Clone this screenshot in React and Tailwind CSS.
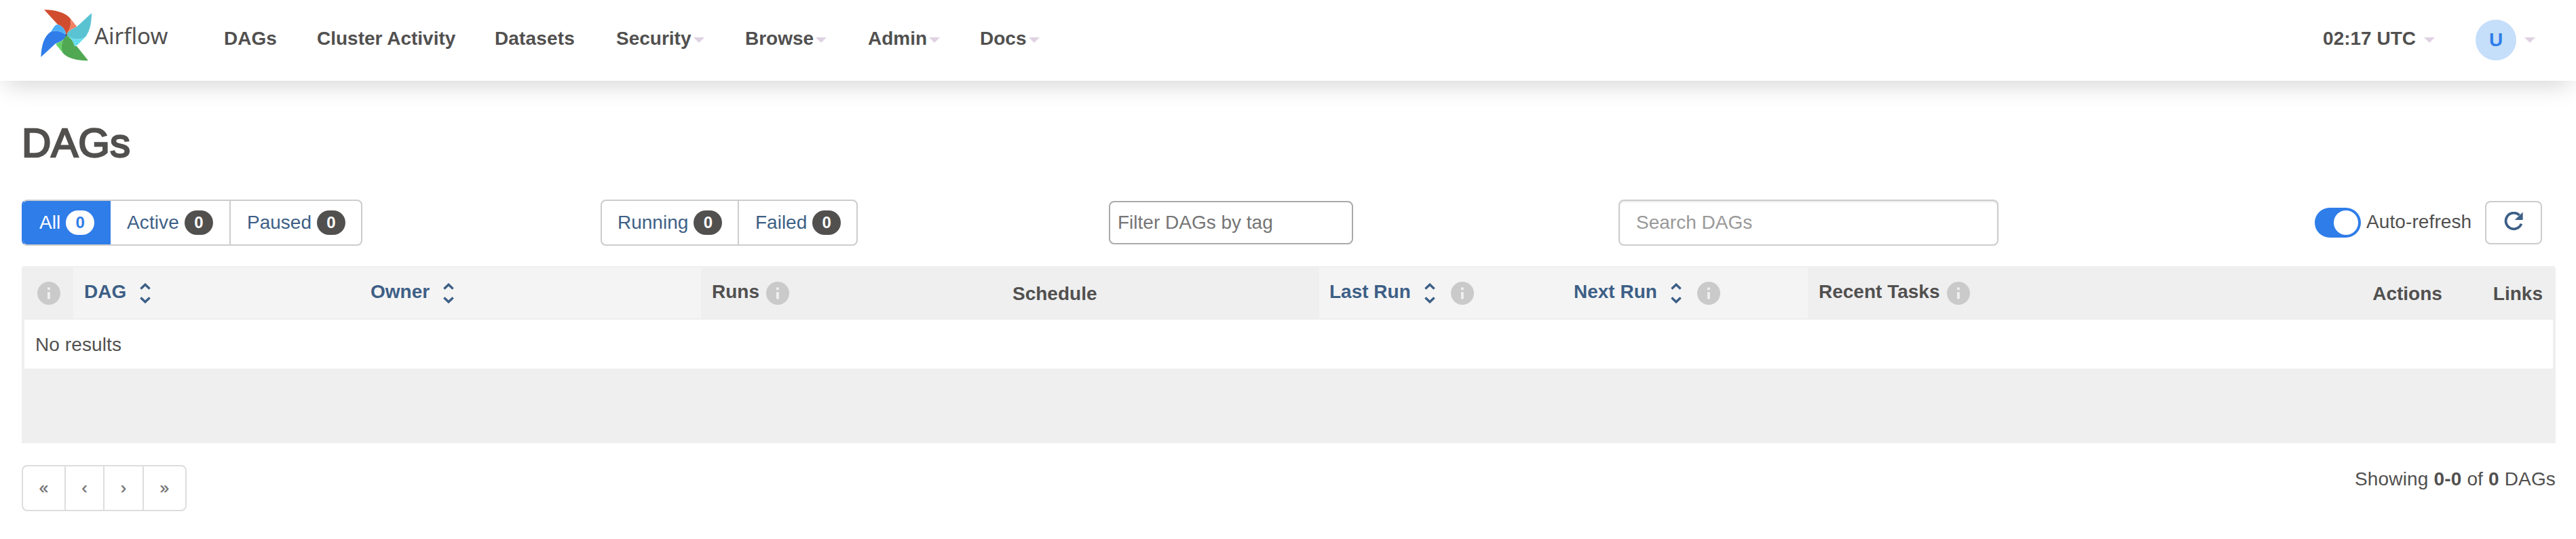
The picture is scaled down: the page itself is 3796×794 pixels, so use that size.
const Caret = ({ className = '' }) => (
  <svg width="16" height="8" viewBox="0 0 16 8" className={`shrink-0 ${className}`}>
    <path d="M0 0H16L8 8Z" fill="#dfd2e2" />
  </svg>
);

const Info = ({ className = '' }) => (
  <svg width="34" height="34" viewBox="0 0 34 34" className={`shrink-0 ${className}`}>
    <circle cx="17" cy="17" r="17" fill="#cacaca" />
    <rect x="15" y="8.4" width="3.8" height="3.6" fill="#f0f0f0" />
    <rect x="15" y="15.2" width="3.8" height="10.3" fill="#f0f0f0" />
  </svg>
);

const Sort = ({ className = '' }) => (
  <svg width="16" height="30" viewBox="0 0 16 30" className={`shrink-0 ${className}`}>
    <path d="M1.4 8.4L8 2.2L14.6 8.4M1.4 21.6L8 27.8L14.6 21.6" fill="none" stroke="#3d5f86" strokeWidth="3.4" />
  </svg>
);

const Logo = () => (
  <svg width="80" height="80" viewBox="28 36 240 240" className="shrink-0">
    <path d="M46 43C92 43 142 56 162 82C168 105 161 128 144 155C140 132 128 115 106 108Z" fill="#d14d2f" />
    <path d="M162 82L191 118C165 130 152 140 144 155C161 128 168 105 162 82Z" fill="#f08163" />
    <path d="M256 58L191 118C165 130 152 140 144 155C172 176 205 180 230 162C250 135 256 95 256 58Z" fill="#59c3d2" />
    <path d="M230 162L190 202L180 203C174 180 162 167 144 155C172 176 205 180 230 162Z" fill="#66ddee" />
    <path d="M241 268L190 204L180 203C174 180 162 167 144 155C125 175 118 205 128 233C150 260 195 267 241 268Z" fill="#50a852" />
    <path d="M128 233L97 194C115 186 137 175 144 155C125 175 118 205 128 233Z" fill="#63d265" />
    <path d="M32 252C34 200 45 160 76 140C98 132 122 137 144 155C137 175 115 186 97 192Z" fill="#307dea" />
    <path d="M76 140C84 126 92 115 98 110L106 108C128 115 140 132 144 155C122 137 98 132 76 140Z" fill="#4cb0f8" />
    <circle cx="144" cy="155" r="4" fill="#51504f" />
  </svg>
);

const Badge = ({ active, children }) => (
  <span
    className={
      active
        ? 'flex h-9 w-[42px] items-center justify-center rounded-full bg-white text-2xl font-bold text-[#2f7de9]'
        : 'flex h-9 w-[42px] items-center justify-center rounded-full bg-[#51504f] text-2xl font-bold text-white'
    }
  >
    {children}
  </span>
);

export default function App() {
  return (
    <div className="h-[794px] w-[3796px] overflow-hidden bg-white font-['Liberation_Sans',Arial,sans-serif] text-[28px] leading-8 text-[#51504f]">
      <header className="flex h-[119px] items-start bg-white shadow-[0_12px_36px_-8px_rgba(0,0,0,0.19)]">
        <a className="ml-[59px] flex h-[90px] w-[271px] items-start pt-3">
          <Logo />
          <span className="mt-[18px] font-['Noto_Sans',sans-serif] text-[33px] leading-[45px]">Airflow</span>
        </a>
        <nav className="flex h-[114px] items-center font-bold">
          <a className="w-[137px]">DAGs</a>
          <a className="w-[262px]">Cluster Activity</a>
          <a className="w-[179px] tracking-[0.15px]">Datasets</a>
          <a className="flex w-[190px] items-center">Security<Caret className="ml-[3px] mt-1" /></a>
          <a className="flex w-[181px] items-center">Browse<Caret className="ml-[3px] mt-1" /></a>
          <a className="flex w-[165px] items-center">Admin<Caret className="ml-[3px] mt-1" /></a>
          <a className="flex items-center">Docs<Caret className="ml-[4px] mt-1" /></a>
        </nav>
        <div className="ml-auto mr-[60px] flex h-[114px] items-center font-bold">
          <span>02:17 UTC</span>
          <Caret className="ml-3 mt-1" />
          <span className="ml-[60px] mt-1 flex size-[60px] items-center justify-center rounded-full bg-[#c5defa] text-[#2f7de9]">U</span>
          <Caret className="ml-3 mt-1" />
        </div>
      </header>

      <main className="pl-8 pr-[30px]">
        <h1 className="mt-[57px] h-[70px] text-[60px] leading-[70px] [-webkit-text-stroke:2.4px_#51504f]">DAGs</h1>

        <div className="mt-12 flex h-[68px] items-center">
          <div className="flex h-[68px] w-[502px] overflow-hidden rounded-lg border-2 border-[#ccc] text-[#3d5f86] [border-left-color:#2f7de9]">
            <a className="-my-0.5 -ml-0.5 flex w-[131px] items-center gap-2 bg-[#2f7de9] pl-[26px] text-white">All<Badge active>0</Badge></a>
            <a className="flex w-[177px] items-center gap-2 border-r-2 border-[#ccc] pl-[24px] tracking-[0.1px]">Active<Badge>0</Badge></a>
            <a className="flex items-center gap-2 pl-[24px]">Paused<Badge>0</Badge></a>
          </div>
          <div className="ml-[351px] flex h-[68px] w-[379px] rounded-lg border-2 border-[#ccc] text-[#3d5f86]">
            <a className="flex w-[202px] items-center gap-2 border-r-2 border-[#ccc] pl-[23px]">Running<Badge>0</Badge></a>
            <a className="flex items-center gap-2 pl-[24px]">Failed<Badge>0</Badge></a>
          </div>
          <div className="ml-[370px] flex h-16 w-[360px] items-center rounded-lg border-2 border-[#aaa] pl-[11px] text-[#757575]">Filter DAGs by tag</div>
          <div className="ml-[391px] flex h-[68px] w-[560px] items-center rounded-lg border-2 border-[#ccc] pl-6 text-[#999] shadow-[inset_0_2px_2px_rgba(0,0,0,0.075)]">Search DAGs</div>
          <div className="ml-auto mr-5 flex items-center">
            <span className="flex h-11 w-[68px] items-center justify-end rounded-full bg-[#2f7de9] pr-1">
              <span className="size-9 rounded-full bg-white" />
            </span>
            <span className="ml-2 w-[175px] pb-0.5 tracking-[0.1px]">Auto-refresh</span>
            <button className="flex h-16 w-[84px] items-center justify-center rounded-lg border-2 border-[#ccc]">
              <svg width="28" height="28" viewBox="0 0 28 28" className="-mt-1">
                <path d="M22.6 5A11.8 11.8 0 1 0 25.4 17.6" fill="none" stroke="#3d5f86" strokeWidth="3.8" />
                <path d="M27.6 0.5V12H15.8Z" fill="#3d5f86" />
              </svg>
            </button>
          </div>
        </div>

        <section className="mt-[30px] h-[261px] rounded-t bg-[#efefef]">
          <div className="grid h-[79px] grid-cols-[76px_422px_503px_443px_468px_360px_360px_1fr] py-0.5 font-bold">
            <div className="flex items-center pl-[23px]"><Info /></div>
            <div className="flex items-center bg-[#f4f4f4] pl-4 text-[#3d5f86]"><span className="pb-[3px]">DAG</span><Sort className="ml-5" /></div>
            <div className="flex items-center bg-[#f4f4f4] pl-4 text-[#3d5f86]"><span className="pb-[3px]">Owner</span><Sort className="ml-5" /></div>
            <div className="flex items-center pl-4"><span className="pb-[3px]">Runs</span><Info className="ml-2.5" /></div>
            <div className="flex items-center pl-4"><span className="pt-0.5">Schedule</span></div>
            <div className="flex items-center bg-[#f4f4f4] pl-[15px] text-[#3d5f86]"><span className="pb-[3px]">Last Run</span><Sort className="ml-5" /><Info className="ml-[23px]" /></div>
            <div className="flex items-center bg-[#f4f4f4] pl-[15px] text-[#3d5f86]"><span className="pb-[3px]">Next Run</span><Sort className="ml-5" /><Info className="ml-[23px]" /></div>
            <div className="flex items-center pl-4">
              <span className="pb-[3px]">Recent Tasks</span><Info className="ml-[11px]" />
              <span className="ml-auto pt-0.5">Actions</span>
              <span className="ml-[75px] mr-[19px] pt-0.5">Links</span>
            </div>
          </div>
          <div className="mx-1 flex h-[72px] items-center bg-white pl-4 pt-px tracking-[0.1px]">No results</div>
        </section>

        <footer className="mt-8 flex items-start justify-between">
          <div className="flex h-[68px] w-[243px] rounded-lg border-2 border-[#ddd] text-2xl text-[#777] [-webkit-text-stroke:0.6px_#777]">
            <a className="flex w-[63px] items-center justify-center border-r-2 border-[#ddd]">«</a>
            <a className="flex w-[57px] items-center justify-center border-r-2 border-[#ddd]">‹</a>
            <a className="flex w-[58px] items-center justify-center border-r-2 border-[#ddd]">›</a>
            <a className="flex flex-1 items-center justify-center">»</a>
          </div>
          <div className="mt-[5px] tracking-[0.16px]">Showing <b>0-0</b> of <b>0</b> DAGs</div>
        </footer>
      </main>
    </div>
  );
}
